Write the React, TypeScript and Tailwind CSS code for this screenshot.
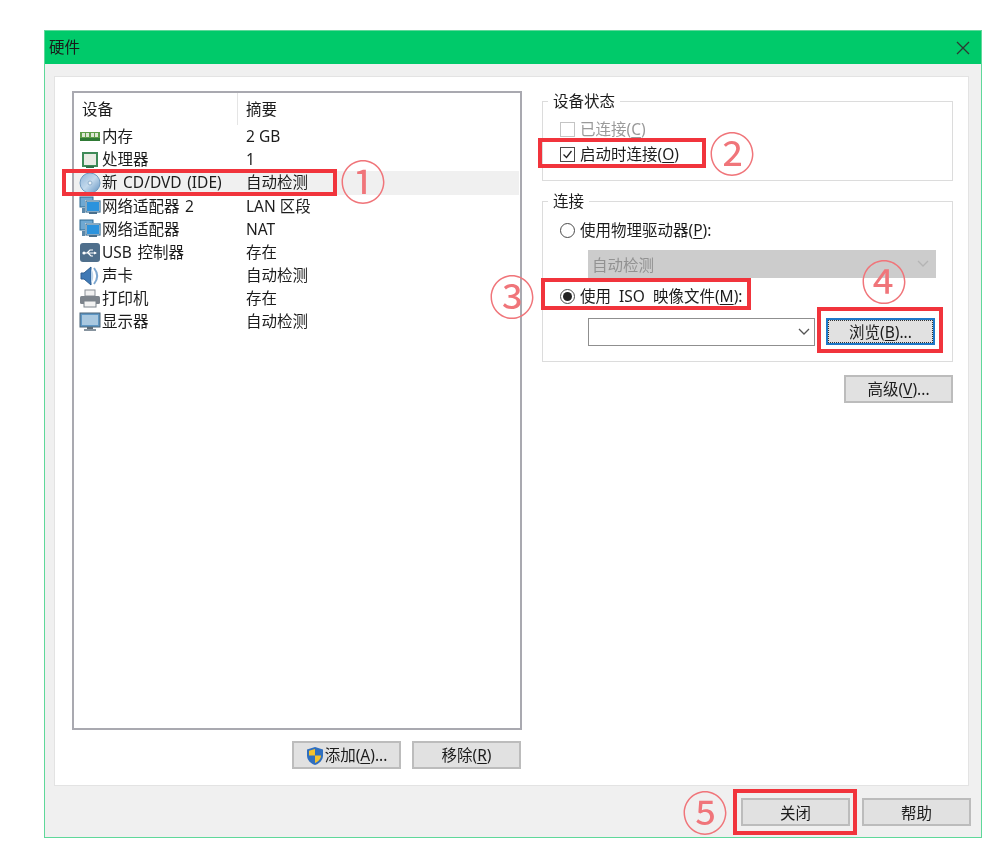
import React from 'react';

const FONT = '"Noto Sans", "Noto Sans CJK SC", sans-serif';

// little device icons for the hardware list, 22x20 box
const RamIcon = () => (
  <svg width="22" height="20" viewBox="0 0 22 20">
    <rect x="1" y="5" width="20" height="9" fill="#5f9e4a" />
    <rect x="1" y="11" width="20" height="3" fill="#2f7a35" />
    <rect x="3" y="6" width="3" height="4" fill="#dfe8d5" />
    <rect x="7" y="6" width="3" height="4" fill="#dfe8d5" />
    <rect x="12" y="6" width="3" height="4" fill="#dfe8d5" />
    <rect x="16" y="6" width="3" height="4" fill="#dfe8d5" />
  </svg>
);

const CpuIcon = () => (
  <svg width="22" height="20" viewBox="0 0 22 20">
    <rect x="4" y="3" width="14" height="13" fill="#e9ebe4" stroke="#3f8a58" strokeWidth="2" />
    <rect x="7" y="16" width="8" height="2" fill="#2f6f48" />
  </svg>
);

const DiscIcon = () => (
  <svg width="22" height="22" viewBox="0 0 22 22">
    <defs>
      <linearGradient id="disc" x1="0" y1="0" x2="1" y2="1">
        <stop offset="0" stopColor="#8db4d8" />
        <stop offset="0.5" stopColor="#c3d9ec" />
        <stop offset="1" stopColor="#5f90c0" />
      </linearGradient>
    </defs>
    <circle cx="11" cy="11" r="10" fill="url(#disc)" stroke="#6f9ac0" />
    <circle cx="11" cy="11" r="2" fill="#eef4f9" stroke="#8fb0cc" />
  </svg>
);

const NetIcon = () => (
  <svg width="23" height="20" viewBox="0 0 23 20">
    <rect x="1" y="1" width="13" height="10" fill="#6fa8d2" stroke="#2f6a93" />
    <rect x="7" y="5" width="14" height="11" fill="#2c93dd" stroke="#e8eef3" strokeWidth="2" />
    <rect x="7" y="5" width="14" height="11" fill="none" stroke="#2a648e" strokeWidth="1" />
    <rect x="10" y="16" width="8" height="2" fill="#4a6f8c" />
    <rect x="3" y="12" width="3" height="5" fill="#5c87a8" />
  </svg>
);

const UsbIcon = () => (
  <svg width="22" height="20" viewBox="0 0 22 20">
    <rect x="1" y="0" width="20" height="19" rx="3" fill="#4f6f8c" />
    <path d="M4 10h13M8 10l3-3h3M9 10l3 3h2" stroke="#fff" strokeWidth="1.2" fill="none" />
    <circle cx="5" cy="10" r="1.6" fill="#fff" />
    <path d="M15 8.5l3 1.5-3 1.5z" fill="#fff" />
  </svg>
);

const SpeakerIcon = () => (
  <svg width="22" height="22" viewBox="0 0 22 22">
    <path d="M2 8h3l7-6v18l-7-6H2z" fill="#3f79b5" stroke="#2e5f92" />
    <path d="M12 4c3 3 3 11 0 14z" fill="#bcd4ea" />
    <path d="M15 3c4 5 4 11 0 16" stroke="#7da7d0" strokeWidth="2" fill="none" />
  </svg>
);

const PrinterIcon = () => (
  <svg width="22" height="20" viewBox="0 0 22 20">
    <rect x="6" y="1" width="10" height="6" fill="#f1f1f1" stroke="#8a8f96" />
    <rect x="1" y="7" width="20" height="8" rx="1.5" fill="#7d848c" />
    <rect x="5" y="12" width="12" height="6" fill="#f3f3f3" stroke="#7d848c" />
  </svg>
);

const MonitorIcon = () => (
  <svg width="22" height="20" viewBox="0 0 22 20">
    <rect x="1" y="1" width="20" height="14" fill="#5f97c4" stroke="#4c6478" />
    <rect x="3" y="3" width="16" height="10" fill="#a9c8e0" />
    <rect x="8" y="15" width="6" height="2" fill="#5e6c78" />
    <rect x="5" y="17" width="12" height="2" fill="#87949f" />
  </svg>
);

const ShieldIcon = () => (
  <svg width="18" height="20" viewBox="0 0 18 20" className="shrink-0">
    <path d="M9 1l8 2.5v6C17 14 13.500 17.500 9 19 4.500 17.500 1 14 1 9.500v-6z" fill="#2f6fc0" />
    <path d="M9 3L3 4.800V9.500H9zM9 9.500V17c3.300-1.300 6-4 6-7.500z" fill="#f3c22f" />
  </svg>
);

const devices = [
  { icon: <RamIcon />, name: '内存', summary: '2 GB' },
  { icon: <CpuIcon />, name: '处理器', summary: '1' },
  { icon: <DiscIcon />, name: '新 CD/DVD (IDE)', summary: '自动检测', selected: true },
  { icon: <NetIcon />, name: '网络适配器 2', summary: 'LAN 区段' },
  { icon: <NetIcon />, name: '网络适配器', summary: 'NAT' },
  { icon: <UsbIcon />, name: 'USB 控制器', summary: '存在' },
  { icon: <SpeakerIcon />, name: '声卡', summary: '自动检测' },
  { icon: <PrinterIcon />, name: '打印机', summary: '存在' },
  { icon: <MonitorIcon />, name: '显示器', summary: '自动检测' },
];

// underlined access key, like 添加(A)...
const Key = ({ label, k, rest }: { label: string; k: string; rest?: string }) => (
  <>
    {label}(<span className="underline underline-offset-2">{k}</span>){rest}
  </>
);

const Button = ({ children, className = '' }: { children: React.ReactNode; className?: string }) => (
  <div
    className={`flex items-center justify-center w-[109px] h-[28px] pt-[2px] bg-[#e1e1e1] border-2 border-[#bcbcbc] text-[15.500px] text-[#1c1c1c] ${className}`}
  >
    {children}
  </div>
);

const Radio = ({ checked }: { checked?: boolean }) => (
  <span className="flex items-center justify-center w-[15px] h-[15px] rounded-full border border-[#4a4a4a] bg-white shrink-0">
    {checked && <span className="w-[9px] h-[9px] rounded-full bg-[#222]" />}
  </span>
);

const Annotation = ({ className }: { className: string }) => (
  <div className={`absolute border-[4px] border-[#f1343c] ${className}`} />
);

const Marker = ({ glyph, className }: { glyph: string; className: string }) => (
  <div
    className={`absolute w-[48px] h-[48px] flex items-center justify-center text-[46px] leading-none text-[#f0757a] ${className}`}
    style={{ fontFamily: '"Liberation Serif", "DejaVu Serif", "Noto Sans CJK SC", serif' }}
  >
    {glyph}
  </div>
);

export default function App() {
  return (
    <div
      className="relative w-[1002px] h-[866px] bg-white pt-[30px] pl-[44px] blur-[0.4px]"
      style={{ fontFamily: FONT }}
    >
      <div className="flex flex-col w-[938px] h-[808px] bg-[#f0f0f0] border border-[#5fd89a]">
        {/* Title bar */}
        <div className="flex items-center justify-between h-[33px] pl-[4px] pr-[8px] bg-[#00ca6a] shrink-0">
          <span className="text-[15.500px] text-[#1a1a1a]">硬件</span>
          <svg width="16" height="16" viewBox="0 0 16 16" className="mr-[2px]">
            <path d="M2 2l12 12M14 2L2 14" stroke="#2b3a32" strokeWidth="1.3" />
          </svg>
        </div>

        {/* Main panel */}
        <div className="flex flex-col mt-[12px] ml-[9px] w-[915px] h-[710px] bg-white border border-[#e3e3e3] pt-[14px] pl-[17px] text-[15.500px] text-[#1c1c1c]">
          <div className="flex gap-[20px]">
            {/* Device list column */}
            <div className="flex flex-col w-[450px]">
              <div className="h-[639px] border-2 border-[#a9a9b0] pl-[4px] pr-[1px]">
                <div className="flex h-[32px]">
                  <div className="w-[160px] pl-[4px] pt-[5px] border-r border-[#e5e5e5]">设备</div>
                  <div className="pl-[8px] pt-[5px]">摘要</div>
                </div>
                {devices.map((d) => (
                  <div
                    key={d.name}
                    className={`flex items-center h-[23.200px] -ml-[4px] pl-[4px] ${d.selected ? 'bg-[#f0f0f0]' : ''}`}
                  >
                    <div className="flex items-center justify-center w-[24px] shrink-0">{d.icon}</div>
                    <div className="w-[144px] whitespace-nowrap [word-spacing:1.500px]">{d.name}</div>
                    <div className="whitespace-nowrap">{d.summary}</div>
                  </div>
                ))}
              </div>
              <div className="flex justify-end gap-[11px] mt-[11px] pr-[1px]">
                <Button className="gap-[1px]">
                  <ShieldIcon />
                  <span>
                    <Key label="添加" k="A" rest="..." />
                  </span>
                </Button>
                <Button>
                  <span>
                    <Key label="移除" k="R" />
                  </span>
                </Button>
              </div>
            </div>

            {/* Right column */}
            <div className="flex flex-col w-[411px]">
              <fieldset className="h-[90px] border border-[#dcdcdc] pl-[17px]">
                <legend className="-ml-[12px] px-[5px] h-[20px] leading-[20px]">设备状态</legend>
                <div className="flex items-center gap-[5px] h-[25px] mt-[6px] text-[#9a9a9a]">
                  <span className="w-[15px] h-[15px] border border-[#c4c4c4] bg-white shrink-0" />
                  <span>
                    <Key label="已连接" k="C" />
                  </span>
                </div>
                <div className="flex items-center gap-[5px] h-[25px]">
                  <span className="flex items-center justify-center w-[15px] h-[15px] border border-[#4a4a4a] bg-white shrink-0">
                    <svg width="13" height="13" viewBox="0 0 13 13">
                      <path d="M2.500 6.500l3 3 5-6.500" stroke="#222" strokeWidth="1.300" fill="none" />
                    </svg>
                  </span>
                  <span>
                    <Key label="启动时连接" k="O" />
                  </span>
                </div>
              </fieldset>

              <fieldset className="mt-[10px] h-[171px] border border-[#dcdcdc] pl-[18px]">
                <legend className="-ml-[13px] px-[5px] h-[20px] leading-[20px]">连接</legend>
                <div className="flex items-center gap-[5px] h-[24px] mt-[7px] -ml-[1px]">
                  <Radio />
                  <span className="pt-[2px]">
                    <Key label="使用物理驱动器" k="P" rest=":" />
                  </span>
                </div>
                <div className="flex items-center justify-between w-[348px] h-[28px] mt-[8px] ml-[27px] pl-[4px] pr-[7px] bg-[#cccccc] text-[#929292]">
                  <span className="pt-[3px]">自动检测</span>
                  <svg width="12" height="8" viewBox="0 0 12 8">
                    <path d="M1 1l5 5 5-5" stroke="#b4b4b4" strokeWidth="1.300" fill="none" />
                  </svg>
                </div>
                <div className="flex items-center gap-[5px] h-[24px] mt-[6px] -ml-[1px]">
                  <Radio checked />
                  <span className="pt-[2px] [word-spacing:4px]">
                    <Key label="使用 ISO 映像文件" k="M" rest=":" />
                  </span>
                </div>
                <div className="flex gap-[11px] mt-[10px] ml-[27px]">
                  <div className="flex items-center justify-end w-[227px] h-[28px] border border-[#8f8f8f] bg-white pr-[4px]">
                    <svg width="12" height="8" viewBox="0 0 12 8">
                      <path d="M1 1l5 5 5-5" stroke="#555" strokeWidth="1.300" fill="none" />
                    </svg>
                  </div>
                  <div className="flex items-center justify-center w-[109px] h-[27px] pt-[2px] bg-[#e1e1e1] border-2 border-[#1e78c8] outline-1 outline-dotted -outline-offset-3 outline-[#333]">
                    <span>
                      <Key label="浏览" k="B" rest="..." />
                    </span>
                  </div>
                </div>
              </fieldset>

              <div className="flex justify-end mt-[13px]">
                <Button>
                  <span>
                    <Key label="高级" k="V" rest="..." />
                  </span>
                </Button>
              </div>
            </div>
          </div>
        </div>

        {/* Footer buttons */}
        <div className="flex justify-end gap-[12px] mt-[12px] mr-[10px]">
          <Button>
            <span className="pt-[1px]">关闭</span>
          </Button>
          <Button>
            <span className="pt-[1px]">帮助</span>
          </Button>
        </div>
      </div>

      {/* Red tutorial annotations */}
      <Annotation className="left-[62px] top-[169px] w-[275px] h-[27px]" />
      <Annotation className="left-[538px] top-[138px] w-[168px] h-[30px]" />
      <Annotation className="left-[541px] top-[278px] w-[210px] h-[32px]" />
      <Annotation className="left-[817px] top-[307px] w-[126px] h-[46px]" />
      <Annotation className="left-[733px] top-[789px] w-[124px] h-[46px]" />
      <Marker glyph="①" className="left-[339px] top-[160px]" />
      <Marker glyph="②" className="left-[708px] top-[132px]" />
      <Marker glyph="③" className="left-[488px] top-[275px]" />
      <Marker glyph="④" className="left-[860px] top-[260px]" />
      <Marker glyph="⑤" className="left-[681px] top-[791px]" />
    </div>
  );
}
